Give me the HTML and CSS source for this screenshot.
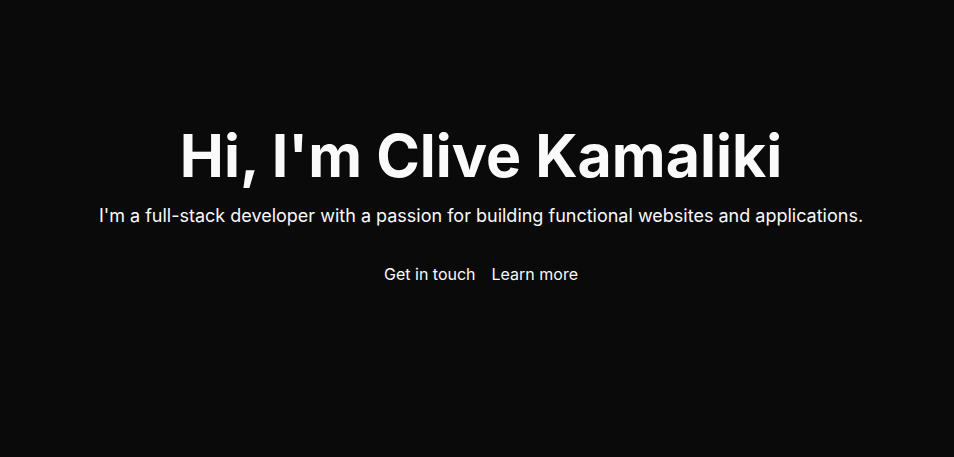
FILE: index.html
```html
<!DOCTYPE html>
<html lang="en">
<head>
<meta charset="utf-8">
<meta name="viewport" content="width=device-width, initial-scale=1">
<title>Clive Kamaliki</title>
<link rel="stylesheet" href="styles.css">
</head>
<body>
<main class="hero">
  <h1 class="hero-title">Hi, I'm Clive Kamaliki</h1>
  <p class="hero-text">I'm a full-stack developer with a passion for building functional websites and applications.</p>
  <nav class="hero-links">
    <a href="#contact">Get in touch</a>
    <a href="#about">Learn more</a>
  </nav>
</main>
</body>
</html>
```

FILE: styles.css
```css
body {
  margin: 0;
  background: #0a0a0a;
  color: #fafafa;
  font-family: Inter, "Liberation Sans", sans-serif;
}

.hero {
  box-sizing: border-box;
  min-height: 100vh;
  padding: 0 0 46px 8px;
  display: flex;
  flex-direction: column;
  align-items: center;
  justify-content: center;
  text-align: center;
}

.hero-title {
  margin: 0;
  font-size: 59px;
  line-height: 60px;
  font-weight: 700;
}

.hero-text {
  margin: 16px 0 32px;
  font-size: 18px;
  line-height: 28px;
}

.hero-links {
  display: flex;
  gap: 16px;
  font-size: 16px;
  line-height: 24px;
}

.hero-links a {
  color: inherit;
  text-decoration: none;
}
```
